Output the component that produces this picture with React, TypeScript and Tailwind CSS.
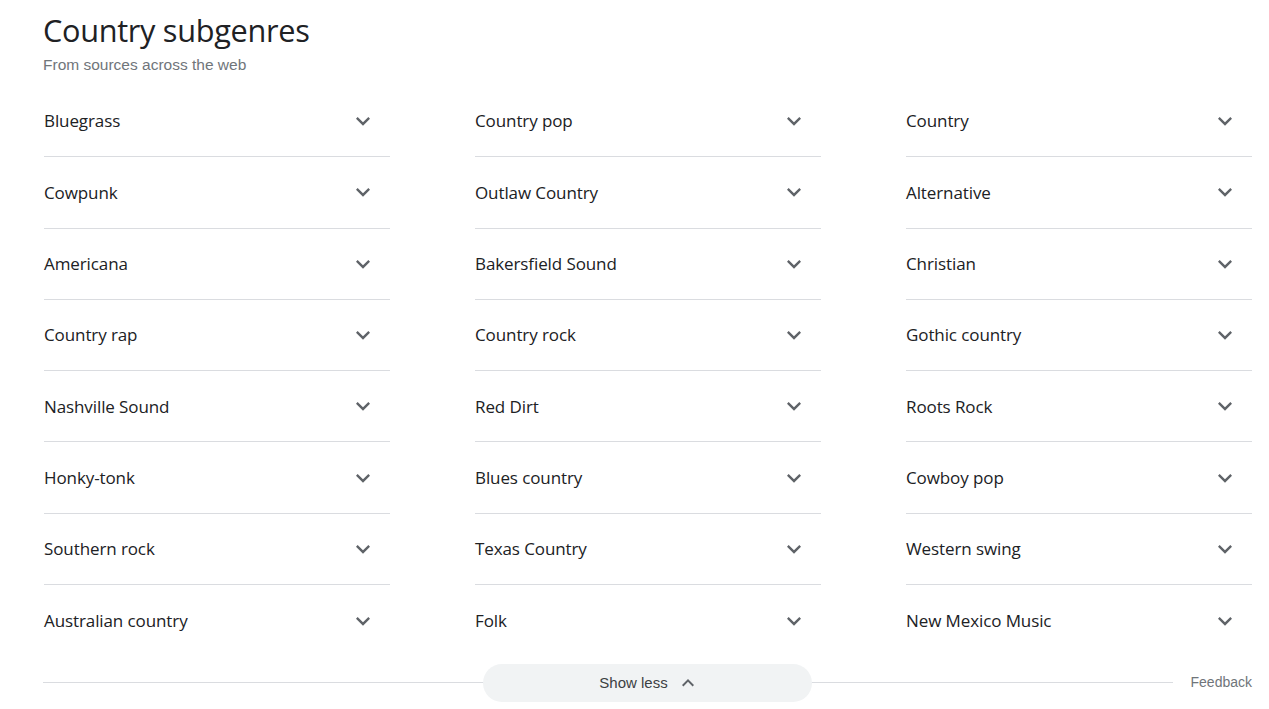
import * as React from 'react'

const columns: string[][] = [
  ['Bluegrass', 'Cowpunk', 'Americana', 'Country rap', 'Nashville Sound', 'Honky-tonk', 'Southern rock', 'Australian country'],
  ['Country pop', 'Outlaw Country', 'Bakersfield Sound', 'Country rock', 'Red Dirt', 'Blues country', 'Texas Country', 'Folk'],
  ['Country', 'Alternative', 'Christian', 'Gothic country', 'Roots Rock', 'Cowboy pop', 'Western swing', 'New Mexico Music'],
]

function Chevron({ up = false, size = 28 }: { up?: boolean; size?: number }) {
  return (
    <svg width={size} height={size} viewBox="0 0 24 24" className="shrink-0 fill-[#5f6368]">
      {up ? (
        <path d="M7.41 15.41 12 10.83l4.59 4.58L18 14l-6-6-6 6z" />
      ) : (
        <path d="M7.41 8.59 12 13.17l4.59-4.58L18 10l-6 6-6-6z" />
      )}
    </svg>
  )
}

function GenreRow({ label, last }: { label: string; last: boolean }) {
  return (
    <div
      className={
        'flex h-[71.3px] items-center justify-between pr-[13px] ' +
        (last ? '' : 'border-b border-[#dadce0]')
      }
    >
      <span className="text-[17px] text-[#202124] font-['Open_Sans',sans-serif] tracking-[-0.1px]">{label}</span>
      <Chevron />
    </div>
  )
}

export default function App() {
  return (
    <div className="min-h-[709px] bg-white pl-[43px] pr-[17px] pt-[10px]">
      <h2 className="text-[30.7px] leading-[40px] text-[#202124] font-['Open_Sans',sans-serif] tracking-[-0.3px]">
        Country subgenres
      </h2>
      <div className="mt-[5px] text-[15.5px] leading-[20px] text-[#70757a] font-['Liberation_Sans',Arial,sans-serif]">
        From sources across the web
      </div>

      <div className="mt-[11px] ml-px grid grid-cols-3 gap-x-[85px]">
        {columns.map((col, i) => (
          <div key={i} className="flex flex-col">
            {col.map((label, j) => (
              <GenreRow key={label} label={label} last={j === col.length - 1} />
            ))}
          </div>
        ))}
      </div>

      <div className="relative mt-[8px] h-[38px]">
        <div className="flex h-[36px] items-center">
          <div className="h-px flex-1 bg-[#dadce0]" />
          <div className="w-[18px]" />
          <span className="text-[14px] text-[#70757a] font-['Liberation_Sans',Arial,sans-serif]">Feedback</span>
        </div>
        <button
          type="button"
          className="absolute left-[440px] top-0 flex h-[38px] w-[329px] items-center justify-center gap-[8px] pl-[4px] rounded-full bg-[#f1f3f4] text-[15px] text-[#3c4043] font-['Liberation_Sans',Arial,sans-serif]"
        >
          Show less
          <Chevron up size={24} />
        </button>
      </div>
    </div>
  )
}
